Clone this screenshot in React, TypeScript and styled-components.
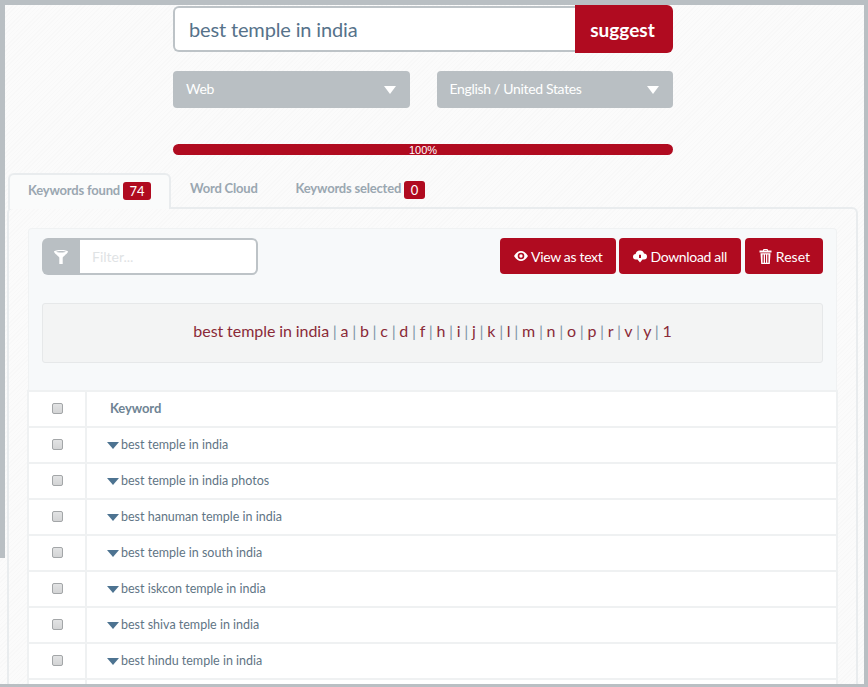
import styled, { createGlobalStyle } from 'styled-components';

const keywords = [
  'best temple in india',
  'best temple in india photos',
  'best hanuman temple in india',
  'best temple in south india',
  'best iskcon temple in india',
  'best shiva temple in india',
  'best hindu temple in india'
];

const letters = 'abcdfhijklmnoprvy1'.split('');

const EyeIcon = () => (
  <svg width='14' height='10' viewBox='0 0 14 10' fill='currentColor' fillRule='evenodd'>
    <path d='M0 5C2.2 1.7 4.4 0 7 0s4.8 1.7 7 5c-2.2 3.3-4.4 5-7 5S2.2 8.300 0 5ZM7 1.700a3.300 3.300 0 1 0 0 6.600 3.300 3.300 0 0 0 0-6.600ZM7 3.300a1.700 1.700 0 1 1 0 3.400 1.700 1.700 0 0 1 0-3.400Z' />
  </svg>
);

const CloudDownIcon = () => (
  <svg width='14' height='13' viewBox='0 0 14 13' fill='currentColor' fillRule='evenodd'>
    <path d='M3 9.500A2.800 2.800 0 0 1 0 6.800 2.800 2.800 0 0 1 2.600 4 4.300 4.300 0 0 1 7 0.500 4 4 0 0 1 11 3.500 3 3 0 0 1 14 6.500 3 3 0 0 1 11 9.500H9.500L7 12.500 4.500 9.500ZM6 4.800V8H8V4.800Z' />
  </svg>
);

const TrashIcon = () => (
  <svg width='13' height='15' viewBox='0 0 13 15' fill='currentColor' fillRule='evenodd'>
    <path d='M4.500 0H8.500L9.200 1.500H12.500V3.400H0.500V1.500H3.800ZM5.200 1L5 1.500H8L7.800 1ZM1.500 4.200H11.500L10.800 15H2.200ZM3.600 5.500V13.700H4.700V5.500ZM6 5.500V13.700H7V5.500ZM8.300 5.500V13.700H9.400V5.500Z' />
  </svg>
);

const FunnelIcon = () => (
  <svg width='14' height='14' viewBox='0 0 14 14' fill='currentColor' fillRule='evenodd'>
    <path d='M0 1.700C0 0.500 3.500 0 7 0s7 0.500 7 1.700C14 3 9.600 6 8.700 7.600V14H5.300V7.600C4.400 6 0 3 0 1.700ZM7 1C4.500 1 2.300 1.300 2.300 1.800S4.500 2.600 7 2.600 11.700 2.300 11.700 1.800 9.500 1 7 1Z' />
  </svg>
);

export default function App() {
  return (
    <>
      <GlobalStyle />
      <Frame>
        <LeftRail />
        <Search>
          <SearchBox>
            <SearchInput defaultValue='best temple in india' />
            <SuggestButton>suggest</SuggestButton>
          </SearchBox>
          <Selects>
            <FakeSelect>
              <span>Web</span>
              <ArrowShape />
            </FakeSelect>
            <FakeSelect>
              <span>English / United States</span>
              <ArrowShape />
            </FakeSelect>
          </Selects>
          <Progress>100%</Progress>
        </Search>

        <Tabs>
          <Tab $active>
            Keywords found <Badge $big>74</Badge>
          </Tab>
          <Tab>Word Cloud</Tab>
          <Tab>
            Keywords selected <Badge>0</Badge>
          </Tab>
        </Tabs>

        <Panel>
          <Well>
            <Toolbar>
              <FilterGroup>
                <FilterAddon>
                  <FunnelIcon />
                </FilterAddon>
                <FilterInput placeholder='Filter...' />
              </FilterGroup>
              <Actions>
                <ActionButton>
                  <EyeIcon />
                  View as text
                </ActionButton>
                <ActionButton>
                  <CloudDownIcon />
                  Download all
                </ActionButton>
                <ActionButton $reset>
                  <TrashIcon />
                  Reset
                </ActionButton>
              </Actions>
            </Toolbar>
            <LetterBar>
              <LetterLink>best temple in india</LetterLink>
              {letters.map((l) => (
                <span key={l}>
                  {' | '}
                  <LetterLink>{l}</LetterLink>
                </span>
              ))}
            </LetterBar>
          </Well>

          <Table>
            <thead>
              <tr>
                <CheckCell>
                  <Check />
                </CheckCell>
                <HeadCell>Keyword</HeadCell>
              </tr>
            </thead>
            <tbody>
              {keywords.map((k) => (
                <tr key={k}>
                  <CheckCell>
                    <Check />
                  </CheckCell>
                  <KeywordCell>
                    <CaretShape />
                    {k}
                  </KeywordCell>
                </tr>
              ))}
              <tr>
                <CheckCell />
                <KeywordCell />
              </tr>
            </tbody>
          </Table>
        </Panel>
      </Frame>
    </>
  );
}

const GlobalStyle = createGlobalStyle`
  html, body {
    margin: 0;
    height: 687px;
    overflow: hidden;
    background: #b9bfc3;
    font-family: Lato, "Open Sans", sans-serif;
    color: #5d7283;
  }
`;

const Frame = styled.div`
  position: relative;
  box-sizing: border-box;
  height: 684px;
  overflow: hidden;
  border-top: 5px solid #b9bfc3;
  margin-right: 4px;
  padding-left: 7px;
  background-color: #fbfbfb;
  background-image: repeating-linear-gradient(
    135deg,
    rgba(0, 0, 0, 0.012) 0 1px,
    transparent 1px 3px
  );
`;

const LeftRail = styled.div`
  position: absolute;
  left: 0;
  top: 0;
  width: 5px;
  height: 553px;
  background: #b9bfc3;
`;

const Search = styled.div`
  width: 500px;
  margin: 0 0 0 166px;
`;

const SearchBox = styled.div`
  display: flex;
  height: 48px;
`;

const SearchInput = styled.input`
  flex: 1;
  min-width: 0;
  box-sizing: border-box;
  height: 46px;
  margin-top: 1px;
  padding: 0 14px;
  border: 2px solid #bdc3c7;
  border-right: 0;
  border-radius: 6px 0 0 6px;
  background: #fff;
  font: 400 20px Lato, sans-serif;
  letter-spacing: -0.15px;
  color: #56728a;
  outline: none;
`;

const SuggestButton = styled.button`
  width: 98px;
  height: 48px;
  padding: 0 3px 0 0;
  border: 0;
  border-radius: 0 6px 6px 0;
  background: #b00b20;
  color: #fff;
  font: 700 19px Lato, sans-serif;
`;

const Selects = styled.div`
  display: flex;
  justify-content: space-between;
  margin-top: 18px;
`;

const FakeSelect = styled.div`
  width: 236.5px;
  height: 37px;
  box-sizing: border-box;
  padding: 0 14px 0 13px;
  display: flex;
  align-items: center;
  justify-content: space-between;
  border-radius: 4px;
  background: #b9bfc3;
  color: #fff;
  font-size: 14px;
  line-height: 34px;
  letter-spacing: -0.33px;
  span {
    margin-top: -2px;
  }
`;

const ArrowShape = styled.i`
  width: 0;
  height: 0;
  border-left: 6px solid transparent;
  border-right: 6px solid transparent;
  border-top: 8px solid #fff;
`;

const Progress = styled.div`
  margin-top: 36px;
  height: 11px;
  border-radius: 6px;
  background: #b00b20;
  color: #fff;
  font: 400 11px/12px "Liberation Sans", sans-serif;
  text-align: center;
`;

const Tabs = styled.div`
  display: flex;
  margin: 18px 0 0 1px;
  position: relative;
  z-index: 1;
  height: 34px;
`;

const Tab = styled.div<{ $active?: boolean }>`
  box-sizing: border-box;
  height: ${(p) => (p.$active ? '36px' : '34px')};
  padding: ${(p) => (p.$active ? '7px 0 0 18px' : '7px 19px 0')};
  ${(p) =>
    p.$active
      ? `
    width: 163px;
    border: 2px solid #e9ecee;
    border-bottom: 0;
    border-radius: 6px 6px 0 0;
    background: #fafbfb;
  `
      : ''}
  font-size: 13px;
  font-weight: 700;
  letter-spacing: -0.2px;
  color: #9aa7b1;
  white-space: nowrap;
`;

const Badge = styled.span<{ $big?: boolean }>`
  display: inline-block;
  box-sizing: border-box;
  min-width: ${(p) => (p.$big ? '28px' : '21px')};
  padding: 0 5px;
  height: 18px;
  margin-top: ${(p) => (p.$big ? '0' : '1px')};
  border-radius: 3px;
  background: #b00b20;
  color: #fff;
  font-size: 13px;
  font-weight: 400;
  letter-spacing: 0;
  line-height: 18px;
  text-align: center;
  vertical-align: top;
`;

const Panel = styled.div`
  box-sizing: border-box;
  width: 851px;
  height: 480px;
  padding: 19px 19px 0;
  border: 2px solid #e9ecee;
  border-radius: 6px 6px 0 0;
`;

const Well = styled.div`
  height: 162px;
  box-sizing: border-box;
  padding: 9px 13px 0 13px;
  background: #f7f9fa;
  border: 1px solid #f0f2f3;
  border-bottom: 0;
  border-radius: 4px 4px 0 0;
`;

const Toolbar = styled.div`
  display: flex;
  justify-content: space-between;
`;

const FilterGroup = styled.div`
  display: flex;
  width: 216px;
  height: 37px;
`;

const FilterAddon = styled.div`
  width: 38px;
  display: flex;
  align-items: center;
  justify-content: center;
  background: #b9bfc3;
  color: #fff;
  border-radius: 6px 0 0 6px;
`;

const FilterInput = styled.input`
  flex: 1;
  min-width: 0;
  box-sizing: border-box;
  border: 2px solid #bdc3c7;
  border-left: 0;
  border-radius: 0 6px 6px 0;
  background: #fff;
  padding: 0 12px;
  font: 400 14px Lato, sans-serif;
  outline: none;
  &::placeholder {
    color: #dfe3e5;
  }
`;

const Actions = styled.div`
  display: flex;
  gap: 3px;
`;

const ActionButton = styled.button<{ $reset?: boolean }>`
  height: 36px;
  padding: ${(p) => (p.$reset ? '0 13px 0 14px' : '0 14px')};
  margin-left: ${(p) => (p.$reset ? '1px' : '0')};
  display: flex;
  align-items: center;
  gap: ${(p) => (p.$reset ? '4px' : '3px')};
  border: 0;
  border-radius: 4px;
  background: #b00b20;
  color: #fff;
  font: 400 14px Lato, sans-serif;
  letter-spacing: ${(p) => (p.$reset ? '0' : '-0.33px')};
`;

const LetterBar = styled.div`
  margin-top: 28px;
  height: 60px;
  box-sizing: border-box;
  padding-top: 15px;
  background: #f3f4f4;
  border: 1px solid #e6e8e9;
  border-radius: 3px;
  text-align: center;
  font-size: 16px;
  line-height: 24px;
  word-spacing: -0.4px;
  color: #7f96a8;
`;

const LetterLink = styled.span`
  color: #8a2a38;
`;

const Table = styled.table`
  width: calc(100% + 2px);
  margin-left: -1px;
  border-collapse: collapse;
  background: #fff;
  table-layout: fixed;
  font-size: 12.5px;
  tr {
    height: 36px;
  }
  td,
  th {
    border: 2px solid #eff1f2;
    padding: 0;
  }
`;

const CheckCell = styled.td`
  width: 56px;
  text-align: center;
  padding-bottom: 4px !important;
`;

const HeadCell = styled.th`
  text-align: left;
  padding: 0 0 2px 23px !important;
  font-weight: 700;
  color: #6f8494;
  font-size: 13px;
  letter-spacing: -0.1px;
`;

const KeywordCell = styled.td`
  padding: 0 0 2px 20px !important;
  color: #5f7585;
`;

const CaretShape = styled.i`
  display: inline-block;
  width: 0;
  height: 0;
  margin-right: 2px;
  border-left: 6px solid transparent;
  border-right: 6px solid transparent;
  border-top: 7px solid #4d7391;
  vertical-align: -0.5px;
`;

const Check = styled.input.attrs({ type: 'checkbox' })`
  appearance: none;
  display: inline-block;
  width: 11px;
  height: 11px;
  margin: 0;
  vertical-align: middle;
  background: linear-gradient(#e2e3e4, #d3d4d5);
  border: 1px solid #a3a6a8;
  border-radius: 2px;
`;
